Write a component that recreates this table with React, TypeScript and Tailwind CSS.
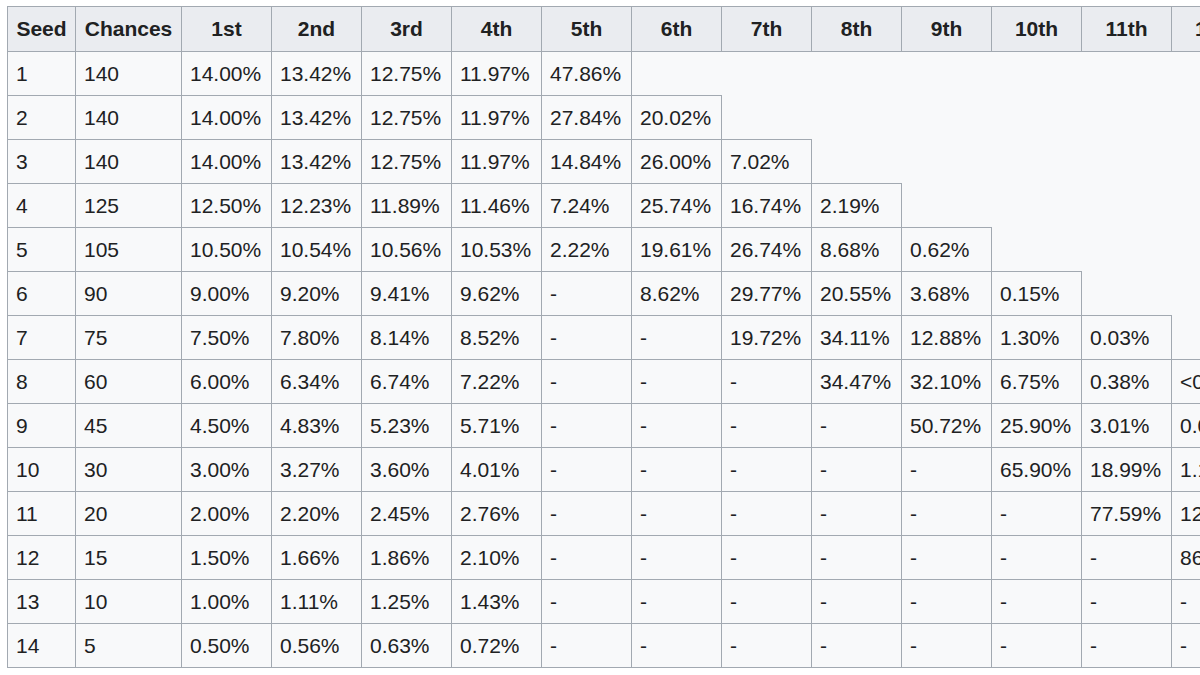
const PLACES = ['1st', '2nd', '3rd', '4th', '5th', '6th', '7th', '8th', '9th', '10th', '11th', '12th', '13th', '14th']

// each row only holds cells up to the worst pick that seed can get
const ROWS: { seed: number; chances: number; odds: string[] }[] = [
  { seed: 1, chances: 140, odds: ['14.00%', '13.42%', '12.75%', '11.97%', '47.86%'] },
  { seed: 2, chances: 140, odds: ['14.00%', '13.42%', '12.75%', '11.97%', '27.84%', '20.02%'] },
  { seed: 3, chances: 140, odds: ['14.00%', '13.42%', '12.75%', '11.97%', '14.84%', '26.00%', '7.02%'] },
  { seed: 4, chances: 125, odds: ['12.50%', '12.23%', '11.89%', '11.46%', '7.24%', '25.74%', '16.74%', '2.19%'] },
  { seed: 5, chances: 105, odds: ['10.50%', '10.54%', '10.56%', '10.53%', '2.22%', '19.61%', '26.74%', '8.68%', '0.62%'] },
  { seed: 6, chances: 90, odds: ['9.00%', '9.20%', '9.41%', '9.62%', '-', '8.62%', '29.77%', '20.55%', '3.68%', '0.15%'] },
  { seed: 7, chances: 75, odds: ['7.50%', '7.80%', '8.14%', '8.52%', '-', '-', '19.72%', '34.11%', '12.88%', '1.30%', '0.03%'] },
  { seed: 8, chances: 60, odds: ['6.00%', '6.34%', '6.74%', '7.22%', '-', '-', '-', '34.47%', '32.10%', '6.75%', '0.38%', '<0.01%'] },
  { seed: 9, chances: 45, odds: ['4.50%', '4.83%', '5.23%', '5.71%', '-', '-', '-', '-', '50.72%', '25.90%', '3.01%', '0.06%', '<0.01%'] },
  { seed: 10, chances: 30, odds: ['3.00%', '3.27%', '3.60%', '4.01%', '-', '-', '-', '-', '-', '65.90%', '18.99%', '1.18%', '0.05%', '<0.01%'] },
  { seed: 11, chances: 20, odds: ['2.00%', '2.20%', '2.45%', '2.76%', '-', '-', '-', '-', '-', '-', '77.59%', '12.58%', '0.42%', '<0.01%'] },
  { seed: 12, chances: 15, odds: ['1.50%', '1.66%', '1.86%', '2.10%', '-', '-', '-', '-', '-', '-', '-', '86.14%', '6.64%', '0.09%'] },
  { seed: 13, chances: 10, odds: ['1.00%', '1.11%', '1.25%', '1.43%', '-', '-', '-', '-', '-', '-', '-', '-', '92.17%', '3.04%'] },
  { seed: 14, chances: 5, odds: ['0.50%', '0.56%', '0.63%', '0.72%', '-', '-', '-', '-', '-', '-', '-', '-', '-', '97.59%'] },
]

const cell = 'border border-[#a2a9b1] px-[8px] align-middle whitespace-nowrap overflow-hidden'

export default function App() {
  return (
    <div
      className="w-[1200px] h-[675px] overflow-hidden bg-white pl-[7px] pt-[6px] text-[#202122] text-[21px]"
      style={{ fontFamily: '"Liberation Sans", Arial, sans-serif' }}
    >
      <table className="table-fixed border-collapse bg-[#f8f9fa] w-[1434px]">
        <colgroup>
          <col className="w-[68px]" />
          <col className="w-[106px]" />
          {PLACES.map((p) => (
            <col key={p} className="w-[90px]" />
          ))}
        </colgroup>
        <thead>
          <tr className="h-[45px]">
            <th className={`${cell} bg-[#eaecf0] font-bold text-center`}>Seed</th>
            <th className={`${cell} bg-[#eaecf0] font-bold text-center`}>Chances</th>
            {PLACES.map((p) => (
              <th key={p} className={`${cell} bg-[#eaecf0] font-bold text-center`}>
                {p}
              </th>
            ))}
          </tr>
        </thead>
        <tbody>
          {ROWS.map((r) => (
            <tr key={r.seed} className="h-[44px]">
              <td className={`${cell} text-left`}>{r.seed}</td>
              <td className={`${cell} text-left`}>{r.chances}</td>
              {r.odds.map((o, i) => (
                <td key={i} className={`${cell} text-left`}>
                  {o}
                </td>
              ))}
            </tr>
          ))}
        </tbody>
      </table>
    </div>
  )
}
